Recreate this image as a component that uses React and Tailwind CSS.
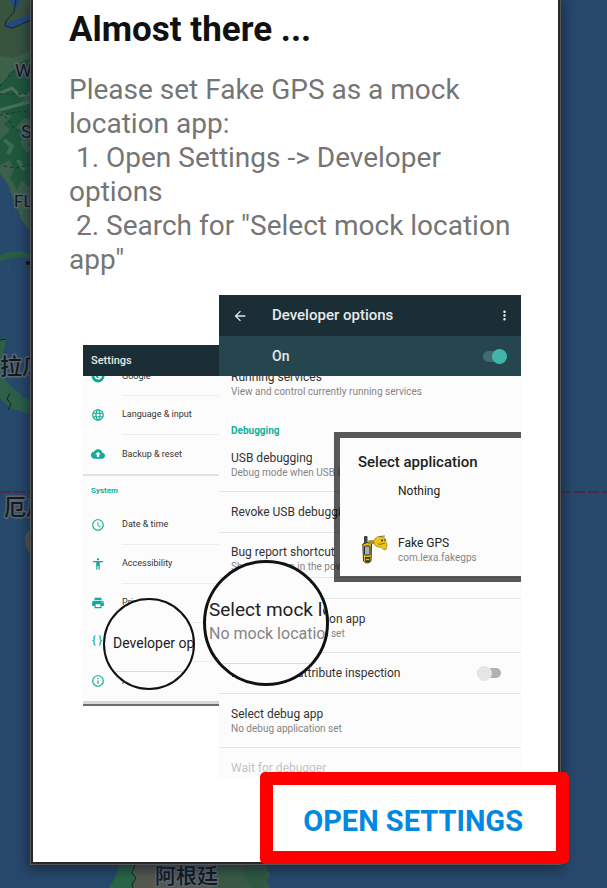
import React from 'react';
import clsx from 'clsx';
import {
  MdAccessibility,
  MdArrowBack,
  MdBackup,
  MdLanguage,
  MdMoreVert,
  MdOutlineInfo,
  MdPrint,
  MdSchedule,
} from 'react-icons/md';

const SETTINGS_ROWS = [
  { label: 'Date & time', icon: MdSchedule },
  { label: 'Accessibility', icon: MdAccessibility },
  { label: 'Printing', icon: MdPrint },
  { label: 'Developer options', icon: null },
  { label: 'About phone', icon: MdOutlineInfo },
];

const MapLabel = ({ x, y, size = 20, bold = false, children }) => (
  <text
    x={x}
    y={y}
    fontSize={size}
    fill="#131a1b"
    stroke="#5b6672"
    strokeWidth="3"
    paintOrder="stroke"
    strokeLinejoin="round"
    className={clsx("font-['Roboto','Noto_Sans_CJK_SC',sans-serif]", bold && 'font-medium')}
  >
    {children}
  </text>
);

const MapBackdrop = () => (
  <svg className="absolute inset-0" width="100%" height="100%" aria-hidden="true">
    {/* north america */}
    <path d="M0 0H40V150L30 151L25 158L24 170L28 180L32 186V232L26 226L21 219L17 206L12 196L8 184L0 174Z" fill="#3c6149" />
    <path d="M0 0H40V45L28 52L14 58L0 56Z" fill="#38543f" />
    <path d="M40 56L24 60L18 68L10 72L4 82L0 84V112L12 116L4 124L10 130L0 140V165L10 160L14 170L10 178L17 190L22 180L28 186L40 190V150L26 152L20 142L28 132L16 128L24 118L40 122V104L20 104L28 92L40 90Z" fill="#20573d" />
    <path d="M0 93L12 88L20 96L32 94M0 110L14 106L30 102" fill="none" stroke="#497158" strokeWidth="3" />
    <path d="M4 140L12 146L8 154M18 160L24 170" fill="none" stroke="#3e6b50" strokeWidth="4" />
    <path d="M10 0H20L18 8L12 6ZM4 24L16 20L31 14V21L18 25L8 29Z" fill="#234a82" />
    <path d="M16 0L14 12L6 21L5 26L13 28L31 20" fill="none" stroke="#18251f" />
    <path d="M0 86L22 62L32 68M0 94H32M0 115L24 111L32 116M4 166L16 168L32 164M5 116L14 128L26 138L30 146" fill="none" stroke="#1a3527" strokeDasharray="3 3" />
    {/* caribbean */}
    <path d="M0 255L8 252L20 251L34 255V259L18 257L8 259L0 261Z" fill="#285e43" />
    <circle cx="28" cy="263" r="2" fill="#0d0f12" />
    <path d="M7 266L10 265L9 268Z" fill="#285e43" />
    {/* central america */}
    <path d="M0 339L6 336L5 345L3 356L1 368L4 378L12 387L22 396L34 402V414L22 412L10 408L0 398Z" fill="#2c6049" />
    <path d="M0 340L6 339M10 393L7 399L11 404L8 410" fill="none" stroke="#14231b" />
    {/* galapagos */}
    <path d="M34 532L28 531L25 537L26 545L28 551L34 555Z" fill="#57604c" />
    <path d="M28 552L34 550V557Z" fill="#2c6049" />
    {/* argentina */}
    <path d="M120 862H264L270 874L266 882L270 888H109L116 876Z" fill="#3a5a45" />
    <path d="M120 862H134L132 872L135 880L131 888H109L116 876Z" fill="#2a6547" />
    <path d="M136 862H206L216 872L212 888H132L136 878L133 872Z" fill="#54584f" />
    <path d="M244 866L262 868L267 876L264 888H252L244 878Z" fill="#2f5a41" />
    <path d="M136 862L132 873L136 878L132 884L133 888" fill="none" stroke="#1b241f" />
    <path d="M0 492H607" stroke="#4a2c44" strokeWidth="2" strokeDasharray="11 3" />
    <MapLabel x={15} y={77} size={19}>W</MapLabel>
    <MapLabel x={21} y={138} size={18}>S</MapLabel>
    <MapLabel x={14} y={207} size={17}>FL</MapLabel>
    <MapLabel x={0} y={374} size={22} bold>拉瓜</MapLabel>
    <MapLabel x={4} y={515} size={22} bold>厄瓜</MapLabel>
    <MapLabel x={155} y={883} size={21} bold>阿根廷</MapLabel>
  </svg>
);

const SettingsRow = ({ label, icon: Icon, divider = true }) => (
  <li className="flex h-[39px] items-center pl-2">
    <span className="flex w-[31px] items-center pb-[2px] text-[#12ab98]">
      {Icon ? <Icon className="h-[14px] w-[14px]" /> : <b className="pl-px text-[11px] font-medium">{'{ }'}</b>}
    </span>
    <span
      className={clsx(
        'flex h-full flex-1 items-center overflow-hidden whitespace-nowrap text-[9px] text-[#333]',
        divider && 'border-b border-[#eceeee]'
      )}
    >
      {label}
    </span>
  </li>
);

const SettingsPhone = () => (
  <div className="mt-[50px] w-[136px] shrink-0 self-start border-b-2 border-[#6a6d6d] bg-[#fcfcfc]">
    <h2 className="flex h-[31px] items-center bg-[#1b2e36] pl-2 pt-px text-[11px] font-medium text-[#e6e9ea]">Settings</h2>
    <ul>
      <li className="flex h-5 items-start overflow-hidden pl-2">
        <span className="w-[31px]">
          <svg viewBox="0 0 14 14" className="-mt-[7px] h-[14px] w-[14px]">
            <circle cx="7" cy="7" r="6.500" fill="#12a794" />
            <path d="M9.500 5A3 3 0 1 0 10 7.500H7.200" fill="none" stroke="#fff" strokeWidth="1.500" />
          </svg>
        </span>
        <span className="h-full flex-1 border-b border-[#eceeee] text-[9px] leading-3 text-[#333]">
          <span className="-mt-[6px] block">Google</span>
        </span>
      </li>
      <SettingsRow label="Language & input" icon={MdLanguage} />
      <SettingsRow label="Backup & reset" icon={MdBackup} divider={false} />
    </ul>
    <h3 className="flex h-8 items-center border-t-2 border-[#dde2e1] pl-2 text-[8px] font-bold text-[#12b09c]">System</h3>
    <ul>
      {SETTINGS_ROWS.map((row, idx) => (
        <SettingsRow key={row.label} {...row} divider={idx < SETTINGS_ROWS.length - 1} />
      ))}
    </ul>
    <div className="h-[3px] bg-[#d5dad9]" />
  </div>
);

const OptionRow = ({ title, detail, className }) => (
  <li className={clsx('flex flex-col justify-center overflow-hidden whitespace-nowrap border-b border-[#e0e6e6] pl-3', className)}>
    <span className="text-[12px] leading-4 text-[#333]">{title}</span>
    {detail && <span className="text-[10px] leading-[14px] text-[#858585]">{detail}</span>}
  </li>
);

const DeveloperPhone = () => (
  <div className="min-w-0 flex-1 bg-[#fcfcfc]">
    <div className="flex h-[41px] items-center bg-[#1b2e36] pl-[13px] pr-[9px] text-[#e6e9ea]">
      <MdArrowBack className="h-4 w-4" />
      <h2 className="flex-1 pl-6 text-[15px] font-medium">Developer options</h2>
      <MdMoreVert className="h-[17px] w-[15px]" />
    </div>
    <label className="flex h-10 items-center justify-between bg-[#26464f] pl-[53px] pr-[14px] text-[14px] font-medium text-[#e6e9ea]">
      On
      <input type="checkbox" role="switch" defaultChecked className="peer sr-only" />
      <span className="flex h-[11px] w-6 items-center justify-end rounded-full bg-[#426b70]">
        <span className="h-[15px] w-[15px] shrink-0 rounded-full bg-[#40b5ab]" />
      </span>
    </label>
    <div className="h-[46px] overflow-hidden pl-3">
      <p className="-mt-[7px] text-[12px] leading-4 text-[#333]">Running services</p>
      <p className="text-[10px] leading-[14px] text-[#858585]">View and control currently running services</p>
    </div>
    <h3 className="h-[18px] pl-3 text-[10px] font-bold leading-[18px] text-[#12b09c]">Debugging</h3>
    <ul>
      <OptionRow className="h-[52px] pb-[7px] pt-[5px]" title="USB debugging" detail="Debug mode when USB is connected" />
      <OptionRow className="h-[41px]" title="Revoke USB debugging" />
      <OptionRow className="h-[45px] pt-[7px]" title="Bug report shortcut" detail="Show a button in the power menu" />
      <li className="h-[21px] border-b border-[#e0e6e6]" />
      <OptionRow className="h-[54px] pt-px" title="Select mock location app" detail="No mock location app set" />
      <li className="h-[41px] border-b border-[#e0e6e6]">
        <label className="flex h-full items-center justify-between pl-3 pr-5 text-[12px] text-[#333]">
          Enable view attribute inspection
          <input type="checkbox" role="switch" className="peer sr-only" />
          <span className="flex h-[10px] w-6 items-center rounded-full bg-[#b2b2b2]">
            <span className="h-[15px] w-[15px] shrink-0 rounded-full bg-[#e6e6e6]" />
          </span>
        </label>
      </li>
      <OptionRow className="h-[54px]" title="Select debug app" detail="No debug application set" />
    </ul>
    <p className="h-[30px] overflow-hidden pl-3 pt-3 text-[12px] leading-4 text-[#c4c4c4]">Wait for debugger</p>
  </div>
);

const GpsDuck = () => (
  <svg viewBox="0 0 26 30" className="h-[30px] w-[26px] shrink-0" aria-hidden="true">
    <rect x="2" y="1" width="3.500" height="9" rx="1" fill="#3c4244" />
    <path d="M.8 9Q5 6 9.500 9L9 26Q5 30 1.500 26Z" fill="#e9be12" stroke="#30342c" />
    <rect x="2.500" y="11" width="5.500" height="9" rx="1" fill="#a9b0b0" stroke="#292e30" />
    <path d="M3 22H8L7.500 27H3.500Z" fill="#292e30" />
    <path d="M4 24.500H7" stroke="#e9be12" strokeWidth="1.500" />
    <path d="M6 6Q9 4 13 6L12 9L7 9Z" fill="#a88f2c" />
    <path d="M12 5Q14 1 19 1.500Q24 2 24 7Q26 10 24.500 12Q25 15 22 15Q20 12 16 12Q11 11 12 5Z" fill="#edc415" stroke="#8a7420" strokeWidth=".6" />
    <path d="M17 1.500L23 1M16 9Q19 10 23 8" fill="none" stroke="#6b5c20" strokeWidth=".8" />
    <circle cx="20" cy="5.500" r="1" fill="#292e30" />
    <circle cx="23" cy="5" r=".8" fill="#292e30" />
  </svg>
);

const AppPicker = () => (
  <div className="absolute right-0 top-[137px] w-[187px] bg-black/65 py-[6px] pl-[6px]">
    <div className="h-[138px] bg-[#fcfcfc] pl-[18px] pt-[14px] text-[#222]">
      <h3 className="text-[15px] font-medium leading-5">Select application</h3>
      <p className="mt-[11px] pl-10 text-[12px] leading-4">Nothing</p>
      <div className="mt-[36px] flex items-start pl-1">
        <GpsDuck />
        <div className="pl-[10px]">
          <p className="text-[12px] leading-4">Fake GPS</p>
          <p className="text-[10px] leading-[14px] text-[#858585]">com.lexa.fakegps</p>
        </div>
      </div>
    </div>
  </div>
);

const App = () => {
  return (
    <main className="relative min-h-screen overflow-hidden bg-[#27496c] font-['Roboto',sans-serif]">
      <MapBackdrop />

      <section
        role="dialog"
        aria-labelledby="dialog-title"
        className="relative ml-[31px] mr-[47px] border-x-2 border-b-2 border-[#292929] bg-white pt-[13px] shadow-[0_0_0_1px_#555,0_2px_12px_3px_rgba(10,20,40,0.6)]"
      >
        <h1 id="dialog-title" className="pl-9 text-[35px] font-bold leading-[34px] text-[#111]">
          Almost there ...
        </h1>
        <p className="mt-[26px] whitespace-pre-wrap pl-9 pr-8 text-[28px] leading-[34px] text-[#757575]">
          {'Please set Fake GPS as a mock location app:\n 1. Open Settings -> Developer options\n 2. Search for "Select mock location app"'}
        </p>

        <figure className="relative ml-[50px] mr-[37px] mt-[18px] flex">
          <SettingsPhone />
          <DeveloperPhone />
          <AppPicker />
          {/* magnifiers */}
          <div className="absolute left-[20px] top-[303px] h-[92px] w-[92px] overflow-hidden rounded-full border-2 border-[#111] bg-[#fcfcfc]">
            <p className="mt-[33px] whitespace-nowrap pl-2 text-[14px] leading-5 text-[#222]">Developer options</p>
            <div className="mt-[18px] border-t border-[#d8dcdc]" />
          </div>
          <div className="absolute left-[120px] top-[265px] h-[126px] w-[126px] overflow-hidden rounded-full border-[3px] border-[#111] bg-[#fcfcfc]">
            <p className="mt-[35px] whitespace-nowrap pl-[3px] text-[19px] leading-6 text-[#222]">Select mock location app</p>
            <p className="whitespace-nowrap pl-[3px] text-[16px] leading-6 text-[#858585]">No mock location app set</p>
            <div className="mt-[17px] border-t border-[#d8dcdc]" />
          </div>
        </figure>

        <div className="relative -mb-[2px] -mr-[11px] -mt-[6px] flex justify-end">
          <button
            type="button"
            className="rounded-[5px] border-[13px] border-[#ff0000] bg-white pb-[13px] pl-[30px] pr-[33px] pt-[19px] text-[29px] font-bold leading-[34px] text-[#0288e0]"
          >
            OPEN SETTINGS
          </button>
        </div>
      </section>
    </main>
  );
};

export default App;
